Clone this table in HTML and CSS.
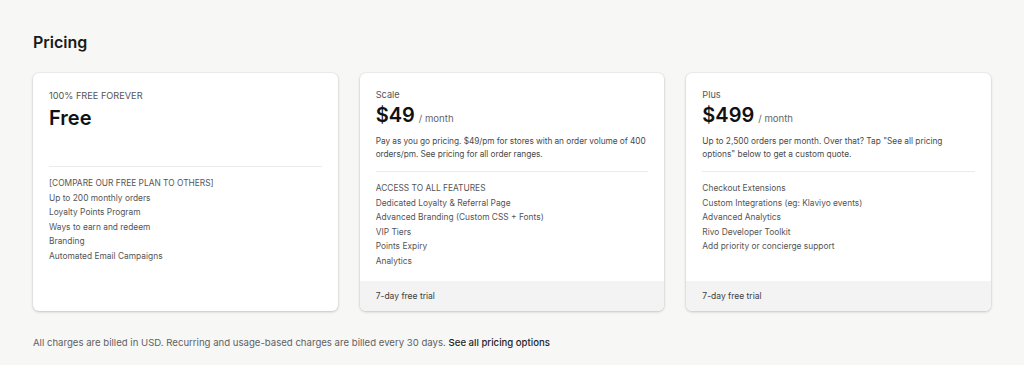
FILE: index.html
```html
<!DOCTYPE html>
<html lang="en">
<head>
<meta charset="utf-8">
<title>Pricing</title>
<link rel="stylesheet" href="styles.css">
</head>
<body>
<main class="page">
  <h1 class="title">Pricing</h1>
  <section class="cards">
    <article class="card">
      <div class="card-body">
        <div class="eyebrow eyebrow-free">100% FREE FOREVER</div>
        <div class="price price-free"><span class="amount">Free</span></div>
        <p class="desc desc-empty"></p>
        <hr class="divider">
        <ul class="features">
          <li>[COMPARE OUR FREE PLAN TO OTHERS]</li>
          <li>Up to 200 monthly orders</li>
          <li>Loyalty Points Program</li>
          <li>Ways to earn and redeem</li>
          <li>Branding</li>
          <li>Automated Email Campaigns</li>
        </ul>
      </div>
    </article>
    <article class="card">
      <div class="card-body">
        <div class="eyebrow">Scale</div>
        <div class="price"><span class="amount">$49</span><span class="per">/ month</span></div>
        <p class="desc desc-wide">Pay as you go pricing. $49/pm for stores with an order volume of 400 orders/pm. See pricing for all order ranges.</p>
        <hr class="divider">
        <ul class="features">
          <li>ACCESS TO ALL FEATURES</li>
          <li>Dedicated Loyalty &amp; Referral Page</li>
          <li>Advanced Branding (Custom CSS + Fonts)</li>
          <li>VIP Tiers</li>
          <li>Points Expiry</li>
          <li>Analytics</li>
        </ul>
      </div>
      <div class="card-foot">7-day free trial</div>
    </article>
    <article class="card">
      <div class="card-body">
        <div class="eyebrow">Plus</div>
        <div class="price"><span class="amount">$499</span><span class="per">/ month</span></div>
        <p class="desc">Up to 2,500 orders per month. Over that? Tap "See all pricing options" below to get a custom quote.</p>
        <hr class="divider">
        <ul class="features">
          <li>Checkout Extensions</li>
          <li>Custom Integrations (eg: Klaviyo events)</li>
          <li>Advanced Analytics</li>
          <li>Rivo Developer Toolkit</li>
          <li>Add priority or concierge support</li>
        </ul>
      </div>
      <div class="card-foot">7-day free trial</div>
    </article>
  </section>
  <p class="note">All charges are billed in USD. Recurring and usage-based charges are billed every 30 days. <a class="link" href="#">See all pricing options</a></p>
</main>
</body>
</html>
```
FILE: styles.css
```css
* { box-sizing: border-box; }
html, body {
  margin: 0;
  padding: 0;
  background: #f7f7f6;
  font-family: Inter, "Noto Sans", Arial, sans-serif;
  color: #303030;
}
.page {
  padding: 32px 33px 0 33px;
}
.title {
  margin: 0;
  font-size: 16px;
  font-weight: 600;
  line-height: 20px;
  color: #1a1a1a;
}
.cards {
  margin-top: 21px;
  display: grid;
  grid-template-columns: 1fr 1fr 1fr;
  gap: 22px;
}
.card {
  background: #fff;
  border-radius: 6px;
  box-shadow: 0 1px 3px rgba(0,0,0,0.18), 0 0 0 1px rgba(0,0,0,0.03);
  display: flex;
  flex-direction: column;
  overflow: hidden;
}
.card-body {
  padding: 15px 16px 12px 16px;
  flex: 1;
}
.eyebrow {
  font-size: 9.2px;
  line-height: 14px;
  color: #555;
}
.eyebrow-free {
  padding-top: 1px;
}
.price {
  margin-top: 0;
  display: flex;
  align-items: baseline;
  gap: 4px;
}
.price-free {
  margin-top: 2px;
}
.amount {
  font-size: 20px;
  font-weight: 600;
  line-height: 26px;
  color: #111;
}
.per {
  font-size: 9.6px;
  color: #666;
}
.desc {
  margin: 7px 0 0 0;
  font-size: 8.3px;
  line-height: 13px;
  color: #4a4a4a;
  min-height: 26px;
}
.desc-wide {
  margin-right: -4px;
  letter-spacing: -0.05px;
}
.desc-empty {
  min-height: 18px;
}
.divider {
  margin: 10px 0 9px 0;
  border: 0;
  border-top: 1px solid #ebebeb;
}
.features {
  list-style: none;
  margin: 0;
  padding: 0;
}
.features li {
  font-size: 8.4px;
  line-height: 14.6px;
  color: #555;
}
.card-foot {
  background: #f3f3f3;
  font-size: 8.5px;
  line-height: 30px;
  padding: 0 16px;
  color: #404040;
}
.note {
  margin: 26px 0 0 0;
  font-size: 9.6px;
  color: #616161;
}
.link {
  color: #1f1f1f;
  font-weight: 500;
  text-decoration: none;
  border-bottom: 1px solid #cfcfcf;
}
```
